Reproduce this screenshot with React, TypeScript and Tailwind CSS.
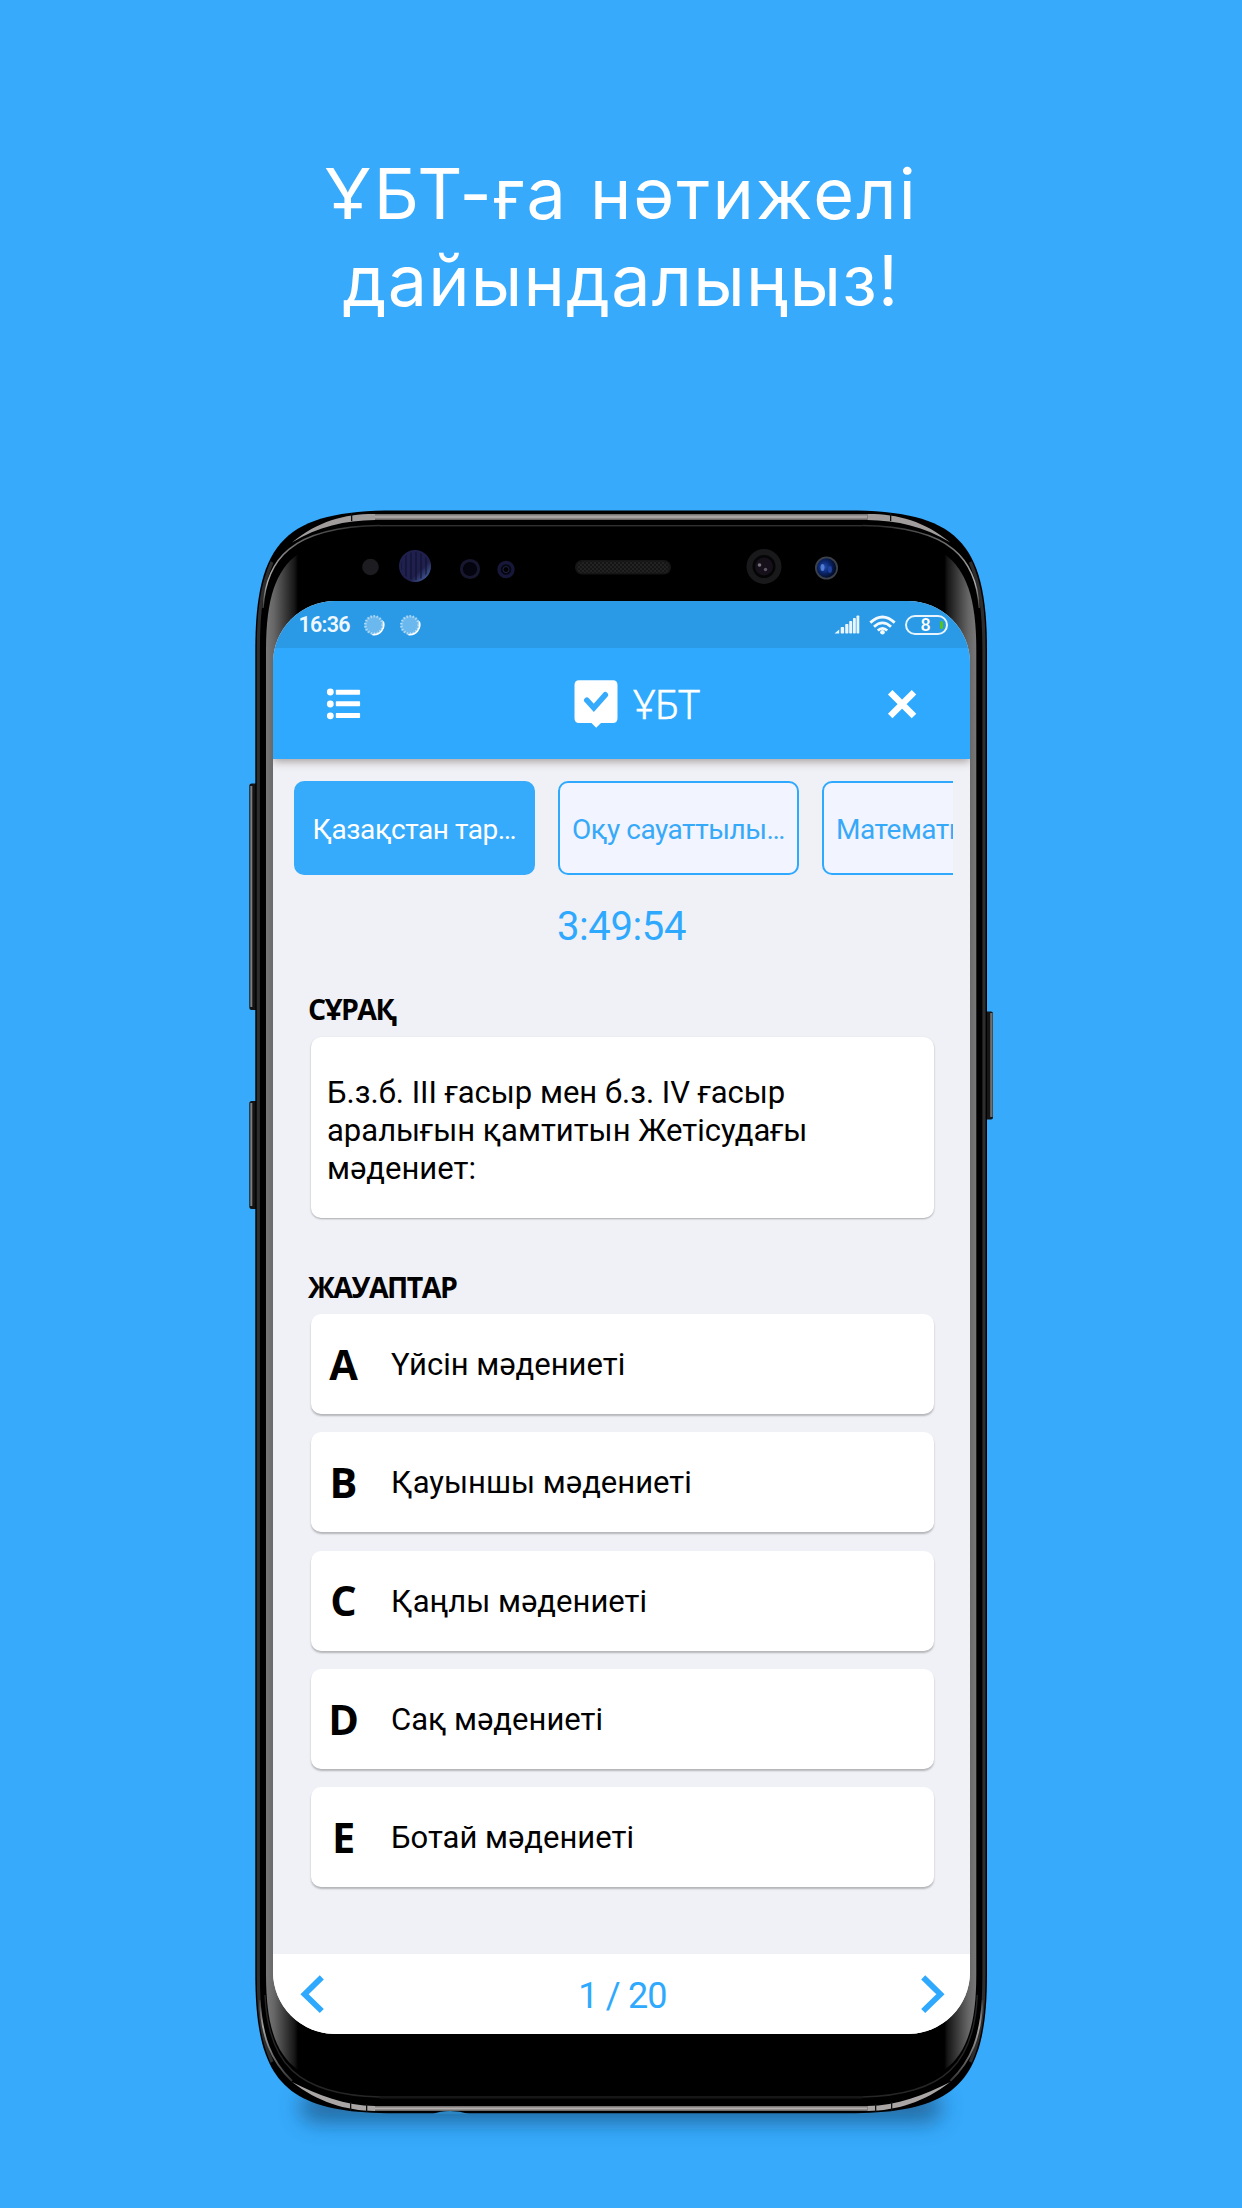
import React from "react";

const answers = [
  { key: "A", text: "Үйсін мәдениеті" },
  { key: "B", text: "Қауыншы мәдениеті" },
  { key: "C", text: "Қаңлы мәдениеті" },
  { key: "D", text: "Сақ мәдениеті" },
  { key: "E", text: "Ботай мәдениеті" },
];

const subjects = [
  { label: "Қазақстан тар…", active: true },
  { label: "Оқу сауаттылы…", active: false },
  { label: "Математика", active: false },
];

const BODY =
  "M255.3 650 C255.3 541 286 510.5 395 510.5 H847.3 C956.3 510.5 987 541 987 650 V1974 C987 2083 956.3 2113.3 847.3 2113.3 H395 C286 2113.3 255.3 2083 255.3 1974 Z";

function FrameSide() {
  return (
    <g>
      <path d="M258.3 1974 V650 C258.3 610 262 585 272 562" fill="none" stroke="#2e2e2e" strokeWidth="3.2" />
      <path d="M258.3 1974 C258.3 2014 262 2039 272 2062" fill="none" stroke="#2e2e2e" strokeWidth="3.2" />
      <path d="M375 514 C345 513.8 318 521 292 542.5 C318 526.5 345 520.4 375 520 Z" fill="#a19d9d" />
      <path d="M375 2111 C345 2110.6 318 2102 292 2082 C318 2095 345 2105.6 375 2106 Z" fill="#aaa6a6" />
      <path d="M263 608 C266 560 290 527 380 525.6" fill="none" stroke="url(#edgeTop)" strokeWidth="1.5" />
      <path d="M259.6 2000 C262 2036 270 2060 292 2081" fill="none" stroke="url(#edgeBottom)" strokeWidth="1.8" />
      <path d="M265 1995 C268 2062 296 2095 380 2097" fill="none" stroke="#262626" strokeWidth="1.4" />
      <path d="M298 554 C276 570 266 598 266 650 V1974 C266 2026 276 2054 298 2070 Z" fill="url(#sideGlass)" />
    </g>
  );
}

function PhoneFrame() {
  return (
    <svg className="absolute left-0 top-0" width="770" height="1670" viewBox="240 500 770 1670" aria-hidden="true">
      <defs>
        <linearGradient id="sideGlass" gradientUnits="userSpaceOnUse" x1="266" y1="0" x2="298" y2="0">
          <stop offset="0" stopColor="#787878" />
          <stop offset="0.25" stopColor="#666" />
          <stop offset="0.9" stopColor="#151515" />
          <stop offset="1" stopColor="#000" />
        </linearGradient>
        <linearGradient id="edgeTop" gradientUnits="userSpaceOnUse" x1="263" y1="608" x2="360" y2="526">
          <stop offset="0" stopColor="#3a3a3a" />
          <stop offset="0.15" stopColor="#b0b0b0" />
          <stop offset="0.45" stopColor="#777" />
          <stop offset="1" stopColor="#303030" />
        </linearGradient>
        <linearGradient id="edgeBottom" gradientUnits="userSpaceOnUse" x1="259" y1="2000" x2="292" y2="2081">
          <stop offset="0" stopColor="#3a3a3a" />
          <stop offset="0.3" stopColor="#a5a5a5" />
          <stop offset="1" stopColor="#333" />
        </linearGradient>
        <linearGradient id="rim" x1="0" y1="0" x2="0" y2="1">
          <stop offset="0" stopColor="#6c6868" />
          <stop offset="0.5" stopColor="#b4b0b0" />
          <stop offset="1" stopColor="#5c5858" />
        </linearGradient>
        <linearGradient id="sensor" x1="0" y1="0" x2="1" y2="1">
          <stop offset="0.65" stopColor="#20204e" />
          <stop offset="1" stopColor="#5078b8" />
        </linearGradient>
        <radialGradient id="lens" cx="0.4" cy="0.45" r="0.6">
          <stop offset="0" stopColor="#1f4bb0" />
          <stop offset="0.5" stopColor="#0a2468" />
          <stop offset="1" stopColor="#020614" />
        </radialGradient>
        <pattern id="stripes" width="5" height="5" patternUnits="userSpaceOnUse">
          <rect width="2" height="5" fill="#11112c" opacity="0.55" />
        </pattern>
        <pattern id="mesh" width="4" height="4" patternUnits="userSpaceOnUse">
          <rect width="2" height="2" fill="#2a2a2a" />
          <rect x="2" y="2" width="2" height="2" fill="#2a2a2a" />
        </pattern>
        <filter id="soft" x="-20%" y="-150%" width="140%" height="400%">
          <feGaussianBlur stdDeviation="11" />
        </filter>
      </defs>

      <rect x="300" y="2092" width="642" height="30" rx="15" fill="#123f63" opacity="0.6" filter="url(#soft)" />

      <g>
        <rect x="249.3" y="783.5" width="9" height="226.5" rx="2.5" fill="#141414" />
        <rect x="250.3" y="786" width="2" height="221" fill="#7d7d7d" />
        <rect x="249.3" y="1101" width="9" height="108" rx="2.5" fill="#141414" />
        <rect x="250.3" y="1103" width="2" height="103" fill="#7d7d7d" />
        <rect x="984" y="1011.5" width="9" height="108" rx="2" fill="#161616" />
        <rect x="990.2" y="1013" width="2.4" height="104" fill="#707070" />
      </g>

      <path d={BODY} fill="#000" />
      <rect x="375" y="514" width="492.3" height="6" fill="url(#rim)" />
      <rect x="375" y="2106" width="492.3" height="5" fill="url(#rim)" />
      <rect x="380" y="525" width="482.3" height="1.4" fill="#303030" />
      <rect x="380" y="2096" width="482.3" height="2.6" fill="#161616" />

      <FrameSide />
      <g transform="translate(1242.3 0) scale(-1 1)">
        <FrameSide />
      </g>

      <rect x="351" y="513" width="1.3" height="8" fill="#111" />
      <rect x="890" y="513" width="1.3" height="8" fill="#111" />
      <rect x="350" y="2102" width="1.3" height="9" fill="#111" />
      <rect x="366" y="2104" width="1.3" height="8" fill="#111" />
      <rect x="891" y="2102" width="1.3" height="9" fill="#111" />
      <rect x="875" y="2104" width="1.3" height="8" fill="#111" />
      <path d="M433 2114 Q440 2111 450 2111 Q460 2111 469 2114 Z" fill="#2c86c4" />

      <circle cx="370.5" cy="567" r="8.3" fill="#1d1c20" />
      <circle cx="415" cy="566" r="16" fill="url(#sensor)" />
      <circle cx="415" cy="566" r="14" fill="url(#stripes)" />
      <circle cx="470" cy="569" r="8.6" fill="#04040f" stroke="#17172f" strokeWidth="3" />
      <circle cx="506" cy="569.5" r="7" fill="#06060f" stroke="#17173a" strokeWidth="3.4" />
      <circle cx="506" cy="569.5" r="3" fill="#000" stroke="#22224a" strokeWidth="1" />
      <rect x="575" y="560" width="96" height="14.5" rx="7" fill="#151515" />
      <rect x="577" y="561.5" width="92" height="11.5" rx="5.5" fill="url(#mesh)" opacity="0.6" />
      <circle cx="764" cy="566.5" r="14.5" fill="#050506" stroke="#19191b" strokeWidth="6" />
      <circle cx="764" cy="566.5" r="9" fill="#15101a" />
      <circle cx="759.5" cy="565" r="1.8" fill="#77727c" />
      <circle cx="765.5" cy="569.5" r="1.7" fill="#5c5762" />
      <circle cx="826.5" cy="568" r="10.6" fill="url(#lens)" stroke="#3c4048" strokeWidth="1.8" />
      <ellipse cx="822.5" cy="567.5" rx="2" ry="3.6" fill="#5f8ce0" opacity="0.8" />
      <ellipse cx="830" cy="569.5" rx="2" ry="3.4" fill="#2348a8" opacity="0.8" />
    </svg>
  );
}

function Spinner() {
  return (
    <svg width="22" height="22" viewBox="0 0 22 22" aria-hidden="true">
      <circle cx="11" cy="11" r="9.6" fill="#6ab8ed" />
      <circle cx="11" cy="11" r="8.7" fill="none" stroke="#b0daf6" strokeWidth="2.6" strokeDasharray="1.3 1.8" />
      <path d="M20.3 8 A9.8 9.8 0 0 1 10 20.6" fill="none" stroke="#fff" strokeWidth="1.7" strokeLinecap="round" />
    </svg>
  );
}

function StatusBar() {
  return (
    <div className="flex h-[47px] shrink-0 items-center bg-[#2a99e6] pl-[25.5px] pr-[22px]">
      <span className="w-[52px] pt-px font-['Roboto',sans-serif] text-[21.5px] font-semibold leading-none tracking-[-0.75px] whitespace-nowrap text-[#f0f8ff]">16:36</span>
      <div className="ml-[12.5px] flex gap-[13.5px]">
        <Spinner />
        <Spinner />
      </div>
      <div className="ml-auto flex items-center">
        <svg width="26" height="19" viewBox="0 0 26 19" fill="#eaf6ff" aria-hidden="true">
          <path d="M0.5 18.5 L5.2 14.5 V18.5 Z" />
          <rect x="6.7" y="12" width="3.4" height="6.5" rx="0.8" />
          <rect x="11.2" y="9" width="3.2" height="9.5" rx="0.8" />
          <rect x="15.2" y="6" width="3" height="12.5" rx="0.8" />
          <rect x="19" y="3" width="2.8" height="15.5" rx="0.8" />
          <rect x="22.5" y="0.5" width="2.8" height="18" rx="0.8" />
        </svg>
        <svg className="ml-[9px]" width="27" height="20" viewBox="0 0 27 20" fill="none" stroke="#f2faff" strokeWidth="2.8" aria-hidden="true">
          <path d="M1.3 7.6 Q13.5 -3.6 25.7 7.6" />
          <path d="M5 11.7 Q13.5 4 22 11.7" />
          <path d="M8.8 15.5 Q13.5 11.2 18.2 15.5" />
          <circle cx="13.5" cy="17.2" r="2.3" fill="#f2faff" stroke="none" />
        </svg>
        <div className="ml-[9px] flex h-[20px] w-[43px] items-center justify-center rounded-full border-2 border-[#e8f5ff]">
          <span className="ml-[10px] font-['Roboto',sans-serif] text-[18px] font-medium leading-none text-white">8</span>
          <span className="ml-[9px] h-[8px] w-[3px] rounded-full bg-[#55c414]" />
        </div>
      </div>
    </div>
  );
}

function Header() {
  return (
    <div className="relative z-10 flex h-[111px] shrink-0 items-center bg-[#2ea9fe] pl-[53px] pr-[53px] shadow-[0_2px_9px_rgba(60,40,30,0.45)] [clip-path:inset(0_0_-20px_0)]">
      <svg width="35" height="32" viewBox="0 0 35 32" fill="#fff" aria-hidden="true">
        <circle cx="4.3" cy="4" r="3.4" />
        <circle cx="4.3" cy="16" r="3.4" />
        <circle cx="4.3" cy="27.8" r="3.4" />
        <rect x="9.8" y="1.7" width="24.3" height="5" rx="0.8" />
        <rect x="9.8" y="13.3" width="24.3" height="5" rx="0.8" />
        <rect x="9.8" y="25.1" width="24.3" height="5" rx="0.8" />
      </svg>
      <div className="ml-[213px] flex items-center">
        <svg width="44" height="48" viewBox="0 0 44 48" aria-hidden="true">
          <path d="M5 0.2 H39 Q43.5 0.2 43.5 5 V38.2 Q43.5 43 39 43 H27 L22.2 47.7 L17.4 43 H5 Q0.5 43 0.5 38.2 V5 Q0.5 0.2 5 0.2 Z" fill="#fff" />
          <path d="M12.8 20.2 L19.8 27.8 L31.3 14.8" fill="none" stroke="#37abfb" strokeWidth="5.6" strokeLinecap="round" />
        </svg>
        <span className="ml-[15.5px] font-['Noto_Sans','Open_Sans',sans-serif] text-[40px] font-light leading-none tracking-[-0.2px] text-white [-webkit-text-stroke:0.6px_white]">ҰБТ</span>
      </div>
      <svg className="ml-auto" width="30" height="30" viewBox="0 0 30 30" fill="none" stroke="#fff" strokeWidth="6.4" strokeLinecap="butt" aria-hidden="true">
        <path d="M3.2 3.2 L27 27 M27 3.2 L3.2 27" />
      </svg>
    </div>
  );
}

function SectionTitle({ children }: { children: React.ReactNode }) {
  return <h2 className="font-['Open_Sans','Noto_Sans',sans-serif] text-[28.5px] font-bold leading-[30px] tracking-[-1.5px] text-black">{children}</h2>;
}

function Screen() {
  return (
    <div className="relative flex h-[1433px] w-[697px] flex-col overflow-hidden rounded-[62px] bg-[#f0f1f6]">
      <StatusBar />
      <Header />
      <div className="flex flex-1 flex-col">
        <div className="mt-[22px] mr-[17.5px] ml-[21px] flex h-[94px] gap-[23.5px] overflow-hidden">
          {subjects.map((s) => (
            <div
              key={s.label}
              className={
                s.active
                  ? "flex w-[240.5px] shrink-0 items-center justify-center rounded-[10px] border-2 border-[#37abfb] bg-[#37abfb] pt-[3px] text-white"
                  : "flex w-[240.5px] shrink-0 items-center rounded-[10px] border-2 border-[#2ea9fe] bg-[#f2f4ff] pt-[3px] pl-[12px] text-[#37a9f9]"
              }
            >
              <span className="font-['Roboto',sans-serif] text-[28px] leading-none tracking-[-0.45px] whitespace-nowrap">{s.label}</span>
            </div>
          ))}
        </div>
        <div className="mt-[30px] text-center font-['Roboto',sans-serif] text-[40px] leading-[44px] tracking-[-0.4px] text-[#2ea9fe]">3:49:54</div>

        <div className="mt-[45px] ml-[35px]">
          <SectionTitle>СҰРАҚ</SectionTitle>
        </div>
        <div className="mt-[13px] mr-[36px] ml-[38px] h-[181px] rounded-[10px] bg-white pt-[37px] pl-[16px] shadow-[0_1px_2px_rgba(0,0,0,0.3)]">
          <p className="font-['Roboto',sans-serif] text-[31px] leading-[38px] whitespace-pre-line text-black">
            {"Б.з.б. III ғасыр мен б.з. IV ғасыр\nаралығын қамтитын Жетісудағы\nмәдениет:"}
          </p>
        </div>

        <div className="mt-[54px] ml-[35px]">
          <SectionTitle>ЖАУАПТАР</SectionTitle>
        </div>
        <div className="mt-[12px] mr-[36px] ml-[38px] flex flex-col gap-[18.25px]">
          {answers.map((a) => (
            <div key={a.key} className="flex h-[100px] items-center rounded-[10px] bg-white pt-px shadow-[0_2px_2px_rgba(0,0,0,0.25)]">
              <span className="w-[65px] text-center font-['Open_Sans','Noto_Sans',sans-serif] text-[41.5px] font-bold leading-none text-black">{a.key}</span>
              <span className="ml-[15px] font-['Roboto',sans-serif] text-[31px] leading-none text-black">{a.text}</span>
            </div>
          ))}
        </div>
      </div>

      <div className="flex h-[80px] shrink-0 items-center justify-between bg-white pr-[25px] pl-[27px]">
        <svg width="25" height="40" viewBox="0 0 25 40" fill="none" stroke="#2ea9fe" strokeWidth="5.8" aria-hidden="true">
          <path d="M21.8 3.4 L4.6 20.2 L21.8 37" strokeLinejoin="miter" />
        </svg>
        <span className="pt-[3px] font-['Roboto',sans-serif] text-[36px] leading-none tracking-[-0.8px] text-[#2ea9fe]">1 / 20</span>
        <svg width="25" height="40" viewBox="0 0 25 40" fill="none" stroke="#2ea9fe" strokeWidth="5.8" aria-hidden="true">
          <path d="M3.2 3.4 L20.4 20.2 L3.2 37" strokeLinejoin="miter" />
        </svg>
      </div>
    </div>
  );
}

export default function App() {
  return (
    <main className="flex h-[2208px] w-[1242px] flex-col overflow-hidden bg-[#37aafc]">
      <h1 className="h-[500px] pt-[150px] text-center font-['Inter',sans-serif] text-[70px] font-normal leading-[87px] text-white">
        <span className="tracking-[2.2px]">ҰБТ-ға нәтижелі</span>
        <br />
        <span className="tracking-[1.2px]">дайындалыңыз!</span>
      </h1>
      <div className="relative ml-[240px] h-[1670px] w-[770px] shrink-0 pt-[101px] pl-[33px]">
        <PhoneFrame />
        <Screen />
      </div>
    </main>
  );
}
